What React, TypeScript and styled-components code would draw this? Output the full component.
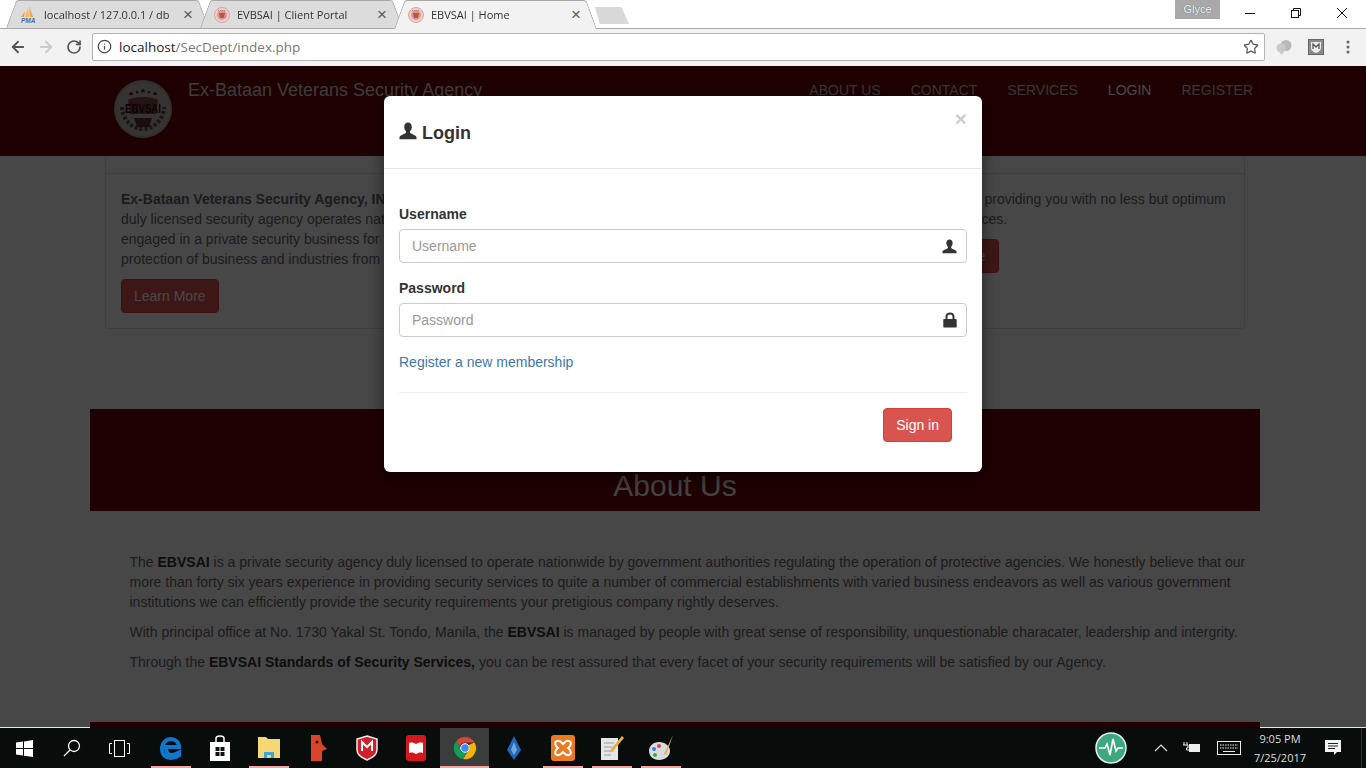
import styled, { createGlobalStyle } from "styled-components";
import { ArrowLeft, ArrowRight, Info, RotateCw, Star } from "lucide-react";

const GlobalStyle = createGlobalStyle`
  html, body {
    margin: 0;
    padding: 0;
    background: #fff;
    overflow: hidden;
  }
  * {
    box-sizing: border-box;
  }
`;

const Screen = styled.div`
  width: 1366px;
  height: 768px;
  display: flex;
  flex-direction: column;
  font-family: "Liberation Sans", Arial, sans-serif;
  font-size: 14px;
  line-height: 20px;
  overflow: hidden;
`;

/* browser chrome */
const TabStrip = styled.div`
  height: 29px;
  display: flex;
  padding-left: 6px;
  background: #fff;
  flex: none;
`;
const Tab = styled.div<{ $active?: boolean }>`
  position: relative;
  width: 203px;
  height: 29px;
  margin-right: -9px;
  padding: 0 15px 0 14px;
  display: flex;
  align-items: center;
  gap: 7px;
  z-index: ${(p) => (p.$active ? 3 : 1)};
  font-family: "Open Sans", sans-serif;
  font-size: 11px;
  color: #333;

  &::before,
  &::after {
    content: "";
    position: absolute;
    top: 0;
    bottom: ${(p) => (p.$active ? "0" : "1px")};
    width: 55%;
    background: ${(p) => (p.$active ? "#f2f2f2" : "#dcdcdc")};
    border-top: 1px solid #a9a9a9;
    z-index: -1;
  }
  &::before {
    left: 0;
    border-left: 1px solid #a9a9a9;
    border-radius: 3px 0 0 0;
    transform-origin: bottom left;
    transform: skewX(-20deg);
  }
  &::after {
    right: 0;
    border-right: 1px solid #a9a9a9;
    border-radius: 0 3px 0 0;
    transform-origin: bottom right;
    transform: skewX(20deg);
  }
`;
const TabTitle = styled.span`
  flex: 1;
  white-space: nowrap;
  overflow: hidden;
  mask-image: linear-gradient(to right, #000 124px, transparent 136px);
`;
const TabClose = styled.span`
  font-size: 17px;
  font-family: "Liberation Sans", sans-serif;
  color: #5a5a5a;
  width: 12px;
  margin-left: 6px;
  text-align: center;
`;
const NewTab = styled.div`
  width: 34px;
  height: 17px;
  margin: 7px 0 0 7px;
  background: #d8d8d8;
  clip-path: polygon(0 0, 78% 0, 100% 100%, 14% 100%);
`;
const Spacer = styled.div`
  flex: 1;
`;
const UserBadge = styled.div`
  width: 45px;
  height: 19px;
  margin-right: 7px;
  background: #a9a9a9;
  color: #f4f4f4;
  font-size: 11px;
  line-height: 18px;
  text-align: center;
  text-shadow: 0 0 1px #555;
`;
const CaptionButton = styled.div`
  width: 46px;
  height: 26px;
  display: flex;
  align-items: center;
  justify-content: center;
`;
const CaptionGroup = styled.div`
  display: flex;
  padding-right: 1px;
`;
const Toolbar = styled.div`
  position: relative;
  z-index: 2;
  height: 38px;
  margin-top: -1px;
  padding: 0 2px 2px 4px;
  display: flex;
  align-items: center;
  background: #f2f2f2;
  border-top: 1px solid #a9a9a9;
  flex: none;
`;
const NavButton = styled.div<{ $w?: number }>`
  width: ${(p) => p.$w ?? 28}px;
  height: 28px;
  display: flex;
  align-items: center;
  justify-content: center;
`;
const Omnibox = styled.div`
  flex: 1;
  height: 28px;
  margin: 0 3px 0 4px;
  padding: 0 5px 0 4px;
  display: flex;
  align-items: center;
  gap: 7px;
  background: #fff;
  border: 1px solid #b4b4b4;
  border-radius: 2px;
  font-family: "Open Sans", sans-serif;
  font-size: 13.5px;
  color: #777;
`;
const Host = styled.span`
  color: #222;
`;
const UrlText = styled.span`
  flex: 1;
`;

/* dimmed page */
const Page = styled.div`
  position: relative;
  flex: 1;
  overflow: hidden;
  background: #fff;
`;
const Header = styled.div`
  height: 90px;
  background: #700000;
`;
const HeaderInner = styled.div`
  width: 1170px;
  margin-left: 90px;
  height: 100%;
  display: flex;
  padding: 14px 7px 0 24px;
`;
const Brand = styled.div`
  margin-left: 16px;
  font-size: 18px;
  line-height: 20px;
  color: #d8d8d8;
`;
const Nav = styled.div`
  margin-left: auto;
  display: flex;
  gap: 30px;
`;
const NavItem = styled.div<{ $active?: boolean }>`
  color: ${(p) => (p.$active ? "#fff" : "#c4c4c4")};
  line-height: 20px;
`;
const Container = styled.div`
  width: 1350px;
`;
const PanelWrap = styled.div`
  width: 1170px;
  margin: 0 auto;
  padding: 0 15px;
`;
const Panel = styled.div`
  border: 1px solid #ddd;
  border-top: 0;
  border-radius: 0 0 4px 4px;
`;
const PanelHead = styled.div`
  height: 18px;
  border-bottom: 1px solid #ddd;
`;
const PanelBody = styled.div`
  padding: 15px;
  display: grid;
  grid-template-columns: repeat(3, 1fr);
  gap: 30px;
  color: #666;
`;
const Blurb = styled.p`
  margin: 0 0 10px;
`;
const DangerButton = styled.div`
  display: inline-block;
  height: 34px;
  padding: 6px 12px;
  background: #d9534f;
  border: 1px solid #d43f3a;
  border-radius: 4px;
  color: #fff;
  white-space: nowrap;
`;
const Band = styled.div<{ $mt: number; $h: number }>`
  width: 1170px;
  height: ${(p) => p.$h}px;
  margin: ${(p) => p.$mt}px auto 0;
  background: #700000;
  display: flex;
  align-items: flex-end;
  justify-content: center;
`;
const BandTitle = styled.div`
  font-size: 30px;
  line-height: 33px;
  margin-bottom: 9px;
  color: #f0f0f0;
`;
const About = styled.div`
  width: 1170px;
  margin: 0 auto;
  padding: 41px 10px 0 39.5px;
  color: #666;
`;
const AboutText = styled.p`
  margin: 0 0 10px;
  b {
    color: #333;
  }
`;
const PageEdge = styled.div`
  position: absolute;
  left: 0;
  right: 0;
  bottom: 0;
  height: 1px;
  z-index: 5;
  background: #e8e8e8;
`;
const PageEdgeBand = styled.div`
  width: 1170px;
  height: 1px;
  margin-left: 90px;
  background: #1f0000;
`;

/* modal */
const Backdrop = styled.div`
  position: absolute;
  inset: 0;
  padding-top: 30px;
  display: flex;
  justify-content: center;
  align-items: flex-start;
  background: rgba(0, 0, 0, 0.72);
`;
const Modal = styled.div`
  position: relative;
  width: 598px;
  height: 376px;
  background: #fff;
  border-radius: 6px;
  box-shadow: 0 5px 15px rgba(0, 0, 0, 0.5);
  color: #333;
`;
const ModalHeader = styled.div`
  position: relative;
  height: 73px;
  padding: 26px 15px 0;
  display: flex;
  align-items: flex-start;
  gap: 5px;
  border-bottom: 1px solid #e5e5e5;
`;
const ModalTitle = styled.div`
  font-size: 18px;
  font-weight: 700;
  line-height: 22px;
`;
const Close = styled.div`
  position: absolute;
  top: 12px;
  right: 15px;
  font-size: 21px;
  line-height: 21px;
  font-weight: 700;
  color: #000;
  opacity: 0.2;
`;
const ModalBody = styled.div`
  padding: 35px 15px 0;
`;
const FieldLabel = styled.div`
  font-weight: 700;
  margin-bottom: 5px;
`;
const Field = styled.div`
  height: 34px;
  margin-bottom: 15px;
  padding: 0 9px 0 12px;
  display: flex;
  align-items: center;
  justify-content: space-between;
  border: 1px solid #ccc;
  border-radius: 4px;
  color: #999;
`;
const MemberLink = styled.a`
  display: block;
  color: #3f76a8;
`;
const Rule = styled.div`
  height: 1px;
  margin: 20px 0 15px;
  background: #eee;
`;
const ModalFooter = styled.div`
  display: flex;
  justify-content: flex-end;
  padding-right: 15px;
`;

/* taskbar */
const Taskbar = styled.div`
  position: relative;
  height: 40px;
  display: flex;
  align-items: stretch;
  background: #080d0b;
  flex: none;
`;
const TaskButton = styled.div<{ $w?: number; $pr?: number; $open?: boolean; $active?: boolean }>`
  position: relative;
  width: ${(p) => p.$w ?? 49}px;
  padding-right: ${(p) => p.$pr ?? 0}px;
  display: flex;
  align-items: center;
  justify-content: center;
  background: ${(p) => (p.$active ? "#3a3d3c" : "transparent")};

  &::after {
    content: "";
    display: ${(p) => (p.$open ? "block" : "none")};
    position: absolute;
    left: ${(p) => (p.$active ? 0 : 5)}px;
    right: ${(p) => (p.$active ? 0 : 4)}px;
    bottom: 0;
    height: 2px;
    background: #f3a3a3;
  }
`;
const Tray = styled.div`
  margin-left: auto;
  margin-right: 4px;
  display: flex;
  align-items: center;
  padding-right: 11px;
  border-right: 1px solid #333;
`;
const TrayItem = styled.div<{ $w: number }>`
  width: ${(p) => p.$w}px;
  display: flex;
  justify-content: center;
`;
const Clock = styled.div`
  width: 72px;
  font-family: "Open Sans", sans-serif;
  font-size: 11px;
  line-height: 19px;
  color: #ddd;
  text-align: center;
`;

const SealIcon = () => (
  <svg width="16" height="16" viewBox="0 0 16 16">
    <circle cx="8" cy="8" r="7.5" fill="#f0cfc9" stroke="#dca59d" />
    <circle cx="8" cy="8" r="5" fill="#d99a92" />
    <path d="M5 6h6l-1 5H6z" fill="#b5554c" />
    <path d="M4 3.500h8" stroke="#c77" strokeDasharray="1 1" />
  </svg>
);

const PmaIcon = () => (
  <svg width="17" height="18" viewBox="0 0 17 18">
    <path d="M9 0 L13 11 H10 Z" fill="#f4a340" />
    <path d="M8 2 L9 11 H5 Z" fill="#f7b95f" />
    <path d="M5 5 L4 11 H1 Z" fill="#f4a340" />
    <text x="1" y="17" fontSize="6.500" fontWeight="700" fontStyle="italic" fill="#4a6fa5" fontFamily="Liberation Sans">
      PMA
    </text>
  </svg>
);

const UserGlyph = ({ size }: { size: number }) => (
  <svg width={size} height={size} viewBox="0 0 18 18">
    <path
      fill="#333"
      d="M9 0.500c-2.400 0-3.800 1.900-3.800 4.400 0 1.800.8 3.500 1.800 4.400.2.900 0 1.600-.6 2C4.500 12.500 1.200 13.200.5 15v2.200h17V15c-.7-1.800-4-2.500-5.900-3.700-.6-.4-.8-1.100-.6-2 1-.9 1.800-2.600 1.800-4.400C12.800 2.400 11.400.5 9 .5z"
    />
  </svg>
);

const LockGlyph = () => (
  <svg width="14" height="16" viewBox="0 0 14 16">
    <path
      fill="#333"
      d="M1 7h1.500V4.600C2.500 2.100 4.400.5 7 .5s4.500 1.600 4.500 4.100V7H13c.4 0 .7.300.7.700v7c0 .4-.3.800-.7.800H1c-.4 0-.7-.4-.7-.8v-7c0-.4.300-.7.700-.7zM4.500 7h5V4.700C9.500 3.300 8.500 2.400 7 2.400s-2.500.9-2.500 2.300z"
    />
  </svg>
);

const SealLogo = () => (
  <svg width="58" height="58" viewBox="0 0 58 58">
    <circle cx="29" cy="29" r="29" fill="#b0a6a6" />
    <circle cx="29" cy="29" r="27" fill="#c0b6b6" />
    <path d="M17 12l1.500 3-3-1.500h3l-3 1.500zM29 9l1.500 3-3-1.500h3l-3 1.500zM41 12l1.500 3-3-1.500h3l-3 1.500z" fill="#5e2a2a" stroke="#5e2a2a" />
    <path d="M23 11l1 2-2-1h2l-2 1zM35 11l1 2-2-1h2l-2 1z" fill="#5e2a2a" stroke="#5e2a2a" />
    <path d="M8 27c0 11 9 22 21 22s21-11 21-22" fill="none" stroke="#6a4a4a" strokeWidth="4" strokeDasharray="3 2" />
    <path d="M14 20c6-4 24-4 30 0l-2 14H16z" fill="#7f4a4a" />
    <path d="M20 38h18l-3 9H23z" fill="#603434" />
    <text x="29" y="33" textAnchor="middle" fontSize="13" fontWeight="700" fill="#2a0808" fontFamily="Liberation Sans" textLength="36" lengthAdjust="spacingAndGlyphs">
      EBVSAI
    </text>
  </svg>
);

const ChromeIcon = () => (
  <svg width="24" height="24" viewBox="0 0 24 24">
    <path d="M12 1a11 11 0 0 1 9.500 5.500H12a5.500 5.500 0 0 0-5.200 3.700L3.300 5.200A11 11 0 0 1 12 1z" fill="#db4437" />
    <path d="M3.300 5.200l4.700 8.200a4.800 4.800 0 0 0 5.500 3.300L10 23A11 11 0 0 1 3.300 5.200z" fill="#0f9d58" />
    <path d="M21.500 6.500A11 11 0 0 1 10.200 23l4.700-7.700a5 5 0 0 0 .8-6.400z" fill="#f4b400" />
    <circle cx="12" cy="12" r="4.300" fill="#4285f4" stroke="#fff" />
  </svg>
);

export default function App(): JSX.Element {
  return (
    <Screen>
      <GlobalStyle />
      <TabStrip>
        <Tab>
          <PmaIcon />
          <TabTitle>localhost / 127.0.0.1 / db</TabTitle>
          <TabClose>×</TabClose>
        </Tab>
        <Tab>
          <SealIcon />
          <TabTitle>EVBSAI | Client Portal</TabTitle>
          <TabClose>×</TabClose>
        </Tab>
        <Tab $active>
          <SealIcon />
          <TabTitle>EBVSAI | Home</TabTitle>
          <TabClose>×</TabClose>
        </Tab>
        <NewTab />
        <Spacer />
        <UserBadge>Glyce</UserBadge>
        <CaptionGroup>
          <CaptionButton>
            <svg width="12" height="12" viewBox="0 0 12 12">
              <path d="M1 6.500h10" stroke="#111" />
            </svg>
          </CaptionButton>
          <CaptionButton>
            <svg width="12" height="12" viewBox="0 0 12 12" fill="none" stroke="#111">
              <rect x="1.500" y="3.500" width="7" height="7" />
              <path d="M3.500 3.500v-2h7v7h-2" />
            </svg>
          </CaptionButton>
          <CaptionButton>
            <svg width="12" height="12" viewBox="0 0 12 12">
              <path d="M1 1l10 10M11 1L1 11" stroke="#111" />
            </svg>
          </CaptionButton>
        </CaptionGroup>
      </TabStrip>
      <Toolbar>
        <NavButton>
          <ArrowLeft size={18} color="#555" strokeWidth={2.4} />
        </NavButton>
        <NavButton>
          <ArrowRight size={18} color="#ccc" strokeWidth={2.4} />
        </NavButton>
        <NavButton>
          <RotateCw size={16} color="#555" strokeWidth={2.6} />
        </NavButton>
        <Omnibox>
          <Info size={15} color="#444" strokeWidth={2} />
          <UrlText>
            <Host>localhost</Host>/SecDept/index.php
          </UrlText>
          <Star size={16} color="#555" strokeWidth={1.8} />
        </Omnibox>
        <NavButton $w={32}>
          <svg width="18" height="16" viewBox="0 0 18 16">
            <circle cx="11" cy="6.500" r="5.500" fill="#b9b9b9" />
            <circle cx="6" cy="9" r="4.500" fill="#c9c9c9" />
            <path d="M5 12l1 4 3-3z" fill="#c9c9c9" />
          </svg>
        </NavButton>
        <NavButton $w={32}>
          <svg width="16" height="16" viewBox="0 0 16 16">
            <rect x="0.500" y="0.500" width="15" height="15" fill="#8a8a8a" stroke="#666" />
            <path d="M3 3h10v6c0 2.500-2.500 4-5 5-2.500-1-5-2.500-5-5z" fill="#eee" />
            <path d="M5 10V5l3 3 3-3v5" fill="none" stroke="#555" strokeWidth="1.300" />
          </svg>
        </NavButton>
        <NavButton $w={32}>
          <svg width="4" height="14" viewBox="0 0 4 14" fill="#666">
            <circle cx="2" cy="2" r="1.500" />
            <circle cx="2" cy="7" r="1.500" />
            <circle cx="2" cy="12" r="1.500" />
          </svg>
        </NavButton>
      </Toolbar>

      <Page>
        <Header>
          <HeaderInner>
            <SealLogo />
            <Brand>Ex-Bataan Veterans Security Agency</Brand>
            <Nav>
              <NavItem>ABOUT US</NavItem>
              <NavItem>CONTACT</NavItem>
              <NavItem>SERVICES</NavItem>
              <NavItem $active>LOGIN</NavItem>
              <NavItem>REGISTER</NavItem>
            </Nav>
          </HeaderInner>
        </Header>
        <Container>
          <PanelWrap>
            <Panel>
              <PanelHead />
              <PanelBody>
                <div>
                  <Blurb>
                    <b>Ex-Bataan Veterans Security Agency, INC.</b> is a
                    <br />
                    duly licensed security agency operates nationwide
                    <br />
                    engaged in a private security business for the
                    <br />
                    protection of business and industries from theft.
                  </Blurb>
                  <DangerButton>Learn More</DangerButton>
                </div>
                <div />
                <div>
                  <Blurb>We take pride in providing you with no less but optimum trustworthy services.</Blurb>
                  <DangerButton>Visit This Page</DangerButton>
                </div>
              </PanelBody>
            </Panel>
          </PanelWrap>
          <Band $mt={80} $h={102}>
            <BandTitle>About Us</BandTitle>
          </Band>
          <About>
            <AboutText>
              The <b>EBVSAI</b> is a private security agency duly licensed to operate nationwide by government
              authorities regulating the operation of protective agencies. We honestly believe that our more than
              forty six years experience in providing security services to quite a number of commercial establishments
              with varied business endeavors as well as various government institutions we can efficiently provide the
              security requirements your pretigious company rightly deserves.
            </AboutText>
            <AboutText>
              With principal office at No. 1730 Yakal St. Tondo, Manila, the <b>EBVSAI</b> is managed by people with
              great sense of responsibility, unquestionable characater, leadership and intergrity.
            </AboutText>
            <AboutText>
              Through the <b>EBVSAI Standards of Security Services,</b> you can be rest assured that every facet of
              your security requirements will be satisfied by our Agency.
            </AboutText>
          </About>
          <Band $mt={50} $h={10} />
        </Container>
        <Backdrop>
          <Modal>
            <ModalHeader>
              <UserGlyph size={18} />
              <ModalTitle>Login</ModalTitle>
              <Close>×</Close>
            </ModalHeader>
            <ModalBody>
              <FieldLabel>Username</FieldLabel>
              <Field>
                Username
                <UserGlyph size={15} />
              </Field>
              <FieldLabel>Password</FieldLabel>
              <Field>
                Password
                <LockGlyph />
              </Field>
              <MemberLink>Register a new membership</MemberLink>
              <Rule />
              <ModalFooter>
                <DangerButton>Sign in</DangerButton>
              </ModalFooter>
            </ModalBody>
          </Modal>
        </Backdrop>
        <PageEdge>
          <PageEdgeBand />
        </PageEdge>
      </Page>

      <Taskbar>
        <TaskButton $w={48}>
          <svg width="17" height="17" viewBox="0 0 17 17" fill="#fff">
            <path d="M0 2.600l7-1v6.400H0zM8 1.400L17 0v8H8zM0 9h7v6.400l-7-1zM8 9h9v8l-9-1.300z" />
          </svg>
        </TaskButton>
        <TaskButton $w={48}>
          <svg width="18" height="18" viewBox="0 0 18 18" fill="none" stroke="#fff" strokeWidth="1.300">
            <circle cx="11" cy="7" r="5.500" />
            <path d="M7 11l-6 6" />
          </svg>
        </TaskButton>
        <TaskButton $w={50} $pr={4}>
          <svg width="21" height="17" viewBox="0 0 21 17" fill="none" stroke="#fff">
            <rect x="5.500" y="0.500" width="10" height="16" />
            <path d="M3 3.500H.5v10H3M18 3.500h2.500v10H18" />
          </svg>
        </TaskButton>
        <TaskButton $open>
          <svg width="22" height="24" viewBox="0 0 22 24" fill="none">
            <path d="M4 11h15C19 6 15 3 11 3 6 3 2 7 2 13s4 9 9 9c3 0 6-1 8-2.500v-3C16 18 14 19 11.500 19 8 19 6 16 6 11" stroke="#0e78d0" strokeWidth="4" />
          </svg>
        </TaskButton>
        <TaskButton>
          <svg width="22" height="26" viewBox="0 0 22 26">
            <path d="M1 7h20v19H1z" fill="#fff" />
            <path d="M7 7V3.500C7 2 8.500 1 11 1s4 1 4 2.500V7" fill="none" stroke="#fff" strokeWidth="1.500" />
            <path d="M6.500 12h4v4h-4zM11.500 12h4v4h-4zM6.500 17h4v4h-4zM11.500 17h4v4h-4z" fill="#111" />
          </svg>
        </TaskButton>
        <TaskButton $open>
          <svg width="22" height="24" viewBox="0 0 22 24">
            <path d="M0 1h8l2 2h12v19H0z" fill="#f6d776" />
            <path d="M6 16h10v6h-3v-3H9v3H6z" fill="#38a5dc" />
          </svg>
        </TaskButton>
        <TaskButton>
          <svg width="20" height="26" viewBox="0 0 20 26">
            <path d="M3 0h9l2 9 5 5-5 2v10H3z" fill="#d9452a" />
            <circle cx="9" cy="7" r="1.500" fill="#300" />
          </svg>
        </TaskButton>
        <TaskButton>
          <svg width="22" height="26" viewBox="0 0 22 26">
            <path d="M11 1l10 3v11c0 5-5 8-10 10C6 23 1 20 1 15V4z" fill="#d0202a" stroke="#eee" strokeWidth="1.500" />
            <path d="M6 16V7l5 5 5-5v9" fill="none" stroke="#fff" strokeWidth="2" />
          </svg>
        </TaskButton>
        <TaskButton>
          <svg width="20" height="26" viewBox="0 0 20 26">
            <rect x="0" y="0" width="20" height="26" rx="3" fill="#d4191c" />
            <path d="M3 8c3-1 5 0 7 1 2-1 4-2 7-1v10c-3-1-5 0-7 1-2-1-4-2-7-1z" fill="#fff" />
          </svg>
        </TaskButton>
        <TaskButton $open $active>
          <ChromeIcon />
        </TaskButton>
        <TaskButton>
          <svg width="16" height="24" viewBox="0 0 16 24">
            <path d="M8 0l7 14-7 10-7-10z" fill="#2267b5" />
            <path d="M8 6l3 8-3 5-3-5z" fill="#6fa8e0" />
          </svg>
        </TaskButton>
        <TaskButton $open>
          <svg width="24" height="26" viewBox="0 0 24 26">
            <rect width="24" height="26" rx="3" fill="#ea7a1f" />
            <path d="M6 6c3-1 4 1 6 3 2-2 3-4 6-3s2 5-1 7c3 2 4 6 1 7s-4-1-6-3c-2 2-3 4-6 3s-2-5 1-7C4 11 3 7 6 6z" fill="none" stroke="#fff" strokeWidth="2" />
          </svg>
        </TaskButton>
        <TaskButton $open>
          <svg width="24" height="26" viewBox="0 0 24 26">
            <path d="M1 3h17v22H1z" fill="#e6e6e6" />
            <path d="M4 8h10M4 12h8M4 16h10M4 20h7" stroke="#999" />
            <path d="M22 1l2 2-11 13-3 1 1-3z" fill="#e8b23a" />
          </svg>
        </TaskButton>
        <TaskButton $open>
          <svg width="26" height="26" viewBox="0 0 26 26">
            <path d="M11 7c6 0 11 4 11 9s-5 9-11 9S1 21 1 16 5 7 11 7z" fill="#d9dde2" />
            <circle cx="6" cy="14" r="2" fill="#3b7dd8" />
            <circle cx="11" cy="11" r="2" fill="#e04b3a" />
            <circle cx="7" cy="20" r="2" fill="#45a845" />
            <path d="M25 0l-9 19 2 1z" fill="#e8b23a" />
          </svg>
        </TaskButton>
        <Tray>
          <TrayItem $w={82}>
            <svg width="32" height="32" viewBox="0 0 32 32">
              <circle cx="16" cy="16" r="15" fill="#3da77f" stroke="#e8f5ef" strokeWidth="1.500" />
              <path d="M4 16h6l2-4 3 11 3-16 3 12 2-3h5" fill="none" stroke="#fff" strokeWidth="1.600" />
            </svg>
          </TrayItem>
          <TrayItem $w={18}>
            <svg width="14" height="8" viewBox="0 0 14 8">
              <path d="M1 7l6-6 6 6" fill="none" stroke="#ddd" strokeWidth="1.200" />
            </svg>
          </TrayItem>
          <TrayItem $w={44}>
            <svg width="18" height="12" viewBox="0 0 18 12">
              <path d="M1 0v3M4 0v3M0 3h5v3H3.500v2H6" fill="none" stroke="#eee" />
              <rect x="6" y="2" width="11" height="8" fill="#eee" />
            </svg>
          </TrayItem>
          <TrayItem $w={30}>
            <svg width="24" height="14" viewBox="0 0 24 14">
              <rect x="0.500" y="0.500" width="23" height="13" fill="none" stroke="#eee" />
              <path d="M3 4h18M3 7h18" stroke="#eee" strokeDasharray="1.500 1" />
              <path d="M6 10.500h12" stroke="#eee" />
            </svg>
          </TrayItem>
          <Clock>
            9:05 PM
            <br />
            7/25/2017
          </Clock>
          <TrayItem $w={34}>
            <svg width="16" height="16" viewBox="0 0 16 16">
              <path d="M0 0h16v12h-4l-3 3v-3H0z" fill="#f4f4f4" />
              <path d="M3 3.500h10M3 6h10M3 8.500h7" stroke="#222" />
            </svg>
          </TrayItem>
        </Tray>
      </Taskbar>
    </Screen>
  );
}
